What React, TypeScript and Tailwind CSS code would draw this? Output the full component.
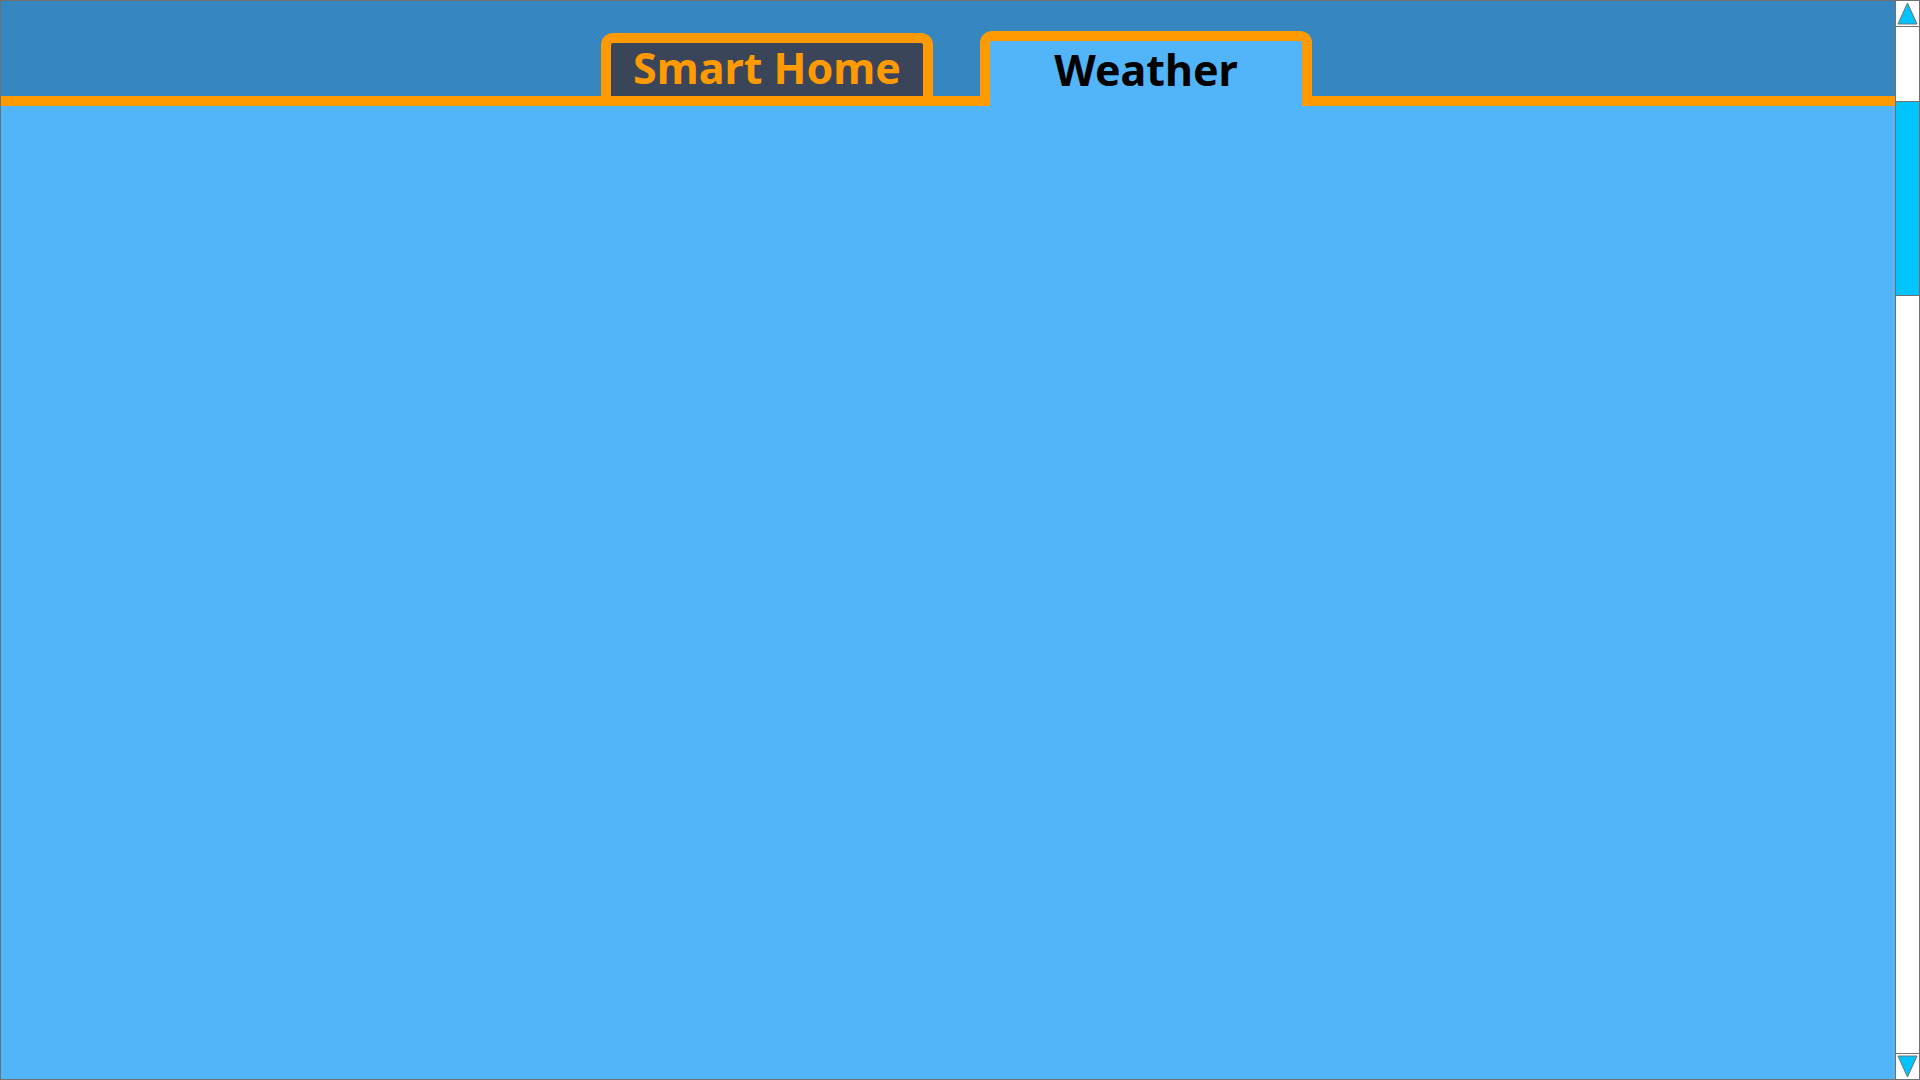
export default function App() {
  return (
    <div className="flex h-screen w-full border border-[#707070] bg-[#52b4f9] font-['Noto_Sans',sans-serif]">
      <main className="flex flex-1 flex-col">
        <header className="flex h-[105px] items-end gap-[47px] border-b-[10px] border-[#ff9b00] bg-[#3687c0] pl-[600px]">
          <button className="flex h-[63px] w-[332px] justify-center rounded-t-[12px] border-x-[10px] border-t-[10px] border-[#ff9b00] bg-[#3b4559] pt-[4px] text-[43px] leading-[42px] font-bold text-[#ff9b00]">
            Smart Home
          </button>
          <button className="relative -mb-[10px] flex h-[75px] w-[332px] justify-center rounded-t-[12px] border-x-[10px] border-t-[10px] border-[#ff9b00] bg-[#52b4f9] pt-[8px] text-[43px] leading-[42px] font-bold text-black">
            Weather
          </button>
        </header>
        <section className="flex-1" />
      </main>

      <aside className="flex w-[24px] flex-col border-l border-[#707070] bg-white">
        <div className="flex h-[26px] items-center justify-center border-b border-[#707070]">
          <svg width="21" height="23" viewBox="0 0 21 23">
            <polygon points="10.5,1 20,22 1,22" fill="#00c4ff" stroke="#707070" strokeWidth="1" />
          </svg>
        </div>
        <div className="h-[74px]" />
        <div className="h-[195px] border-y border-[#707070] bg-[#00c4ff]" />
        <div className="flex-1" />
        <div className="flex h-[26px] items-center justify-center border-t border-[#707070]">
          <svg width="21" height="23" viewBox="0 0 21 23">
            <polygon points="1,1 20,1 10.5,22" fill="#00c4ff" stroke="#707070" strokeWidth="1" />
          </svg>
        </div>
      </aside>
    </div>
  )
}
